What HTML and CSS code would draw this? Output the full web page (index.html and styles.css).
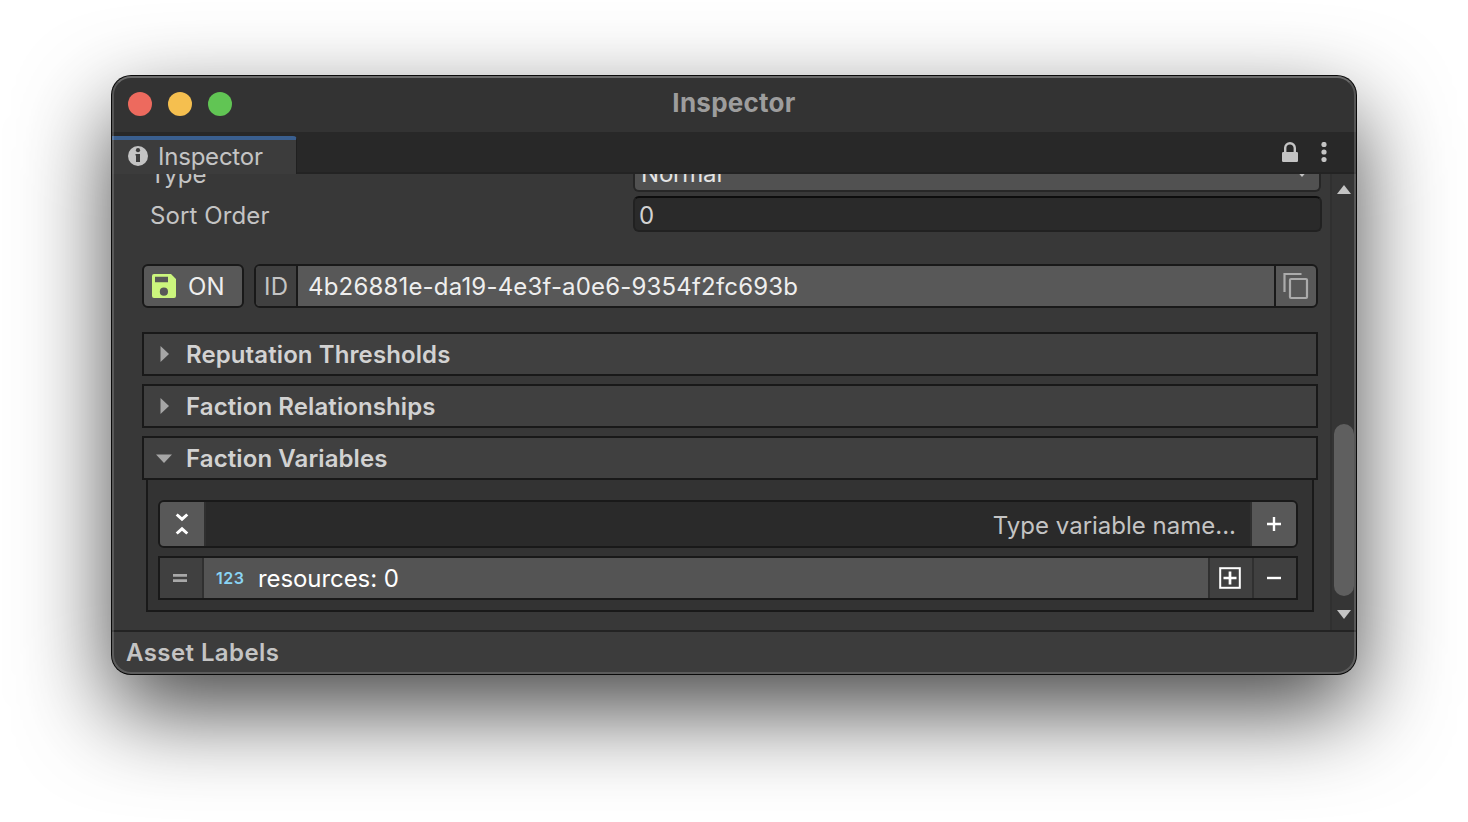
FILE: index.html
```html
<!DOCTYPE html>
<html lang="en">
<head>
<meta charset="utf-8">
<title>Inspector</title>
<link rel="stylesheet" href="styles.css">
</head>
<body>
<main class="window">
  <header class="titlebar">
    <div class="lights"><i class="light close"></i><i class="light minimise"></i><i class="light zoom"></i></div>
    <h1 class="title">Inspector</h1>
  </header>
  <nav class="tabbar">
    <div class="tab">
      <svg class="info" viewBox="0 0 20 20"><circle cx="10" cy="10" r="10" fill="#c4c4c4"/><circle cx="10" cy="4.200" r="2.100" fill="#3c3c3c"/><path d="M7.500 8H12v8H8V9.500h-.5z" fill="#3c3c3c"/></svg>
      <span class="tab-label">Inspector</span>
    </div>
    <div class="tab-tools">
      <svg width="16" height="20" viewBox="0 0 16 20"><path d="M3.200 11V6a4.800 4.800 0 0 1 9.600 0v5" fill="none" stroke="#c4c4c4" stroke-width="2.400"/><rect y="10" width="16" height="10" rx="1.200" fill="#c4c4c4"/></svg>
      <svg width="6" height="20" viewBox="0 0 6 20" fill="#c4c4c4"><circle cx="3" cy="2.500" r="2.600"/><circle cx="3" cy="10" r="2.600"/><circle cx="3" cy="17.500" r="2.600"/></svg>
    </div>
  </nav>
  <section class="body">
    <div class="content">
      <div class="field type-row"><label class="type-label">Type</label><div class="dropdown"><span>Normal</span><svg width="14" height="8" viewBox="0 0 14 8"><path d="M0 0h14L7 8z" fill="#c4c4c4"/></svg></div></div>
      <div class="field"><label>Sort Order</label><div class="number">0</div></div>
      <div class="id-row">
        <button class="toggle"><svg width="24" height="24" viewBox="0 0 24 24"><path fill="#cbf57d" fill-rule="evenodd" d="M2 0h17l5 5v17q0 2-2 2H2q-2 0-2-2V2q0-2 2-2zM3 2.700v5.600h13v-5.600zM11.900 13.600a4.100 4.100 0 1 0 0 8.200a4.100 4.100 0 0 0 0-8.200z"/></svg><span>ON</span></button>
        <div class="id-box"><span class="id-name">ID</span><span class="id-value">4b26881e-da19-4e3f-a0e6-9354f2fc693b</span><button class="copy"><svg width="26" height="28" viewBox="0 0 26 28" fill="none" stroke="#ababab"><path d="M1.500 20V2H18.500" stroke-width="2.200"/><rect x="7" y="7" width="17" height="19" rx="1" stroke-width="2.200"/></svg></button></div>
      </div>
      <div class="foldouts">
        <div class="foldout"><svg class="arrow" viewBox="0 0 16 16"><path d="M4.500 0v16l8.500-8z"/></svg><span>Reputation Thresholds</span></div>
        <div class="foldout"><svg class="arrow" viewBox="0 0 16 16"><path d="M4.500 0v16l8.500-8z"/></svg><span>Faction Relationships</span></div>
        <div class="foldout"><svg class="arrow" viewBox="0 0 16 16"><path d="M0 4.500h16l-8 8.500z"/></svg><span>Faction Variables</span></div>
      </div>
      <div class="panel">
        <div class="add-row">
          <button class="cell"><svg width="44" height="44" viewBox="0 0 44 44" fill="none" stroke="#fff" stroke-width="3"><path d="M16.700 12.500l5.300 4.700 5.300-4.700M16.700 31.500l5.300-4.700 5.300 4.700"/></svg></button>
          <span class="placeholder">Type variable name...</span>
          <button class="cell"><svg width="44" height="44" viewBox="0 0 44 44" fill="none" stroke="#fff" stroke-width="2.400"><path d="M15 22h14M22 15v14"/></svg></button>
        </div>
        <div class="var-row">
          <span class="handle"><svg width="14" height="8" viewBox="0 0 14 8" stroke="#a8a8a8" stroke-width="2.800"><path d="M0 1.400h14M0 6.600h14"/></svg></span>
          <div class="var"><b>123</b><span>resources: 0</span></div>
          <button class="act"><svg width="42" height="40" viewBox="0 0 42 40" fill="none" stroke="#fff" stroke-width="2"><rect x="10.200" y="10.200" width="19.600" height="19.600"/><path d="M13.500 20h13M20 13.500v13" stroke-width="2.700"/></svg></button>
          <button class="act"><svg width="42" height="40" viewBox="0 0 42 40" stroke="#fff" stroke-width="2.400"><path d="M13 20h14"/></svg></button>
        </div>
      </div>
    </div>
    <div class="scrollbar">
      <svg width="14" height="9" viewBox="0 0 14 9"><path d="M0 9L7 0l7 9z" fill="#c4c4c4"/></svg>
      <div class="thumb"></div>
      <svg width="14" height="9" viewBox="0 0 14 9"><path d="M0 0h14L7 9z" fill="#c4c4c4"/></svg>
    </div>
  </section>
  <footer class="footer">Asset Labels</footer>
</main>
</body>
</html>
```
FILE: styles.css
```css
* { box-sizing: border-box; }
html, body { height: 100%; }
body {
  margin: 0;
  padding: 76px 112px 0;
  overflow: hidden;
  background: #fff;
  font: 400 24px/28px Inter, "Liberation Sans", sans-serif;
  letter-spacing: .1px;
  color: #c4c4c4;
}
svg { display: block; flex: none; }
button { padding: 0; border: 0; background: none; color: inherit; font: inherit; letter-spacing: inherit; }
.window {
  position: relative;
  display: flex;
  flex-direction: column;
  width: 1244px;
  height: 598px;
  border-radius: 19px;
  background: #383838;
  box-shadow: 0 0 0 1px #0a0a0a, 0 36px 92px rgba(0, 0, 0, .73);
  overflow: hidden;
}
/* Light rim drawn over the window's edge */
.window::after {
  content: "";
  position: absolute;
  inset: 0;
  border: 2px solid rgba(255, 255, 255, .17);
  border-top-color: rgba(255, 255, 255, .28);
  border-radius: 19px;
  pointer-events: none;
}
.titlebar { display: grid; grid-template-columns: 1fr auto 1fr; height: 56px; background: #333; }
.lights { display: flex; gap: 16px; padding: 16px; }
.light { width: 24px; height: 24px; border-radius: 50%; }
.close { background: #ed6a5e; }
.minimise { background: #f5bf4f; }
.zoom { background: #61c554; }
.title { margin: 13px 0 0; font-size: 26px; font-weight: 700; letter-spacing: .25px; color: #9d9d9d; }
.tabbar { display: flex; justify-content: space-between; height: 42px; padding-top: 4px; background: #282828; box-shadow: inset 0 -2px #232323; }
.tab { display: flex; gap: 10px; width: 185px; padding: 6px 0 0 16px; border-top: 4px solid #3a5f8f; border-right: 1px solid #202020; border-radius: 0 4px 0 0; background: #3c3c3c; }
.info { width: 20px; height: 20px; }
.tab-label { margin-top: -3px; letter-spacing: -.22px; }
.tab-tools { display: flex; gap: 23px; padding: 6px 29px 0 0; }
.body { display: flex; height: 456px; }
.content { width: 1218px; height: 456px; padding: 0 8px 0 30px; overflow: hidden; }
.field { display: flex; padding-left: 8px; }
.field label { flex: none; width: 483px; padding-top: 6px; }
.field .type-label { padding-top: 5px; }
.type-row { height: 36px; margin: -18px 0 4px; }
.dropdown { display: flex; justify-content: space-between; width: 688px; height: 36px; padding: 4px 10px 0 6px; border: 2px solid #262626; border-top: 0; border-radius: 6px; background: #515151; color: #e4e4e4; letter-spacing: -.2px; }
.dropdown svg { margin-top: 9px; }
.number { width: 689px; height: 36px; padding: 4px 4px 0; border: 2px solid #212121; border-top-color: #0d0d0d; border-radius: 6px; background: #2a2a2a; color: #d2d2d2; }
.id-row { display: flex; gap: 10px; width: 1176px; height: 44px; margin: 32px 0 24px; }
.toggle { display: flex; align-items: center; gap: 12px; width: 102px; padding-left: 8px; border: 2px solid #191919; border-radius: 6px; background: #585858; color: #eee; }
.toggle span { padding-top: 1px; }
.id-box { display: flex; width: 1064px; border: 2px solid #191919; border-radius: 6px; background: #585858; color: #eee; line-height: 41px; letter-spacing: .18px; }
.id-name { width: 42px; padding-left: 8px; border-right: 2px solid #191919; background: #404040; color: #c4c4c4; border-radius: 4px 0 0 4px; }
.id-value { flex: 1; padding-left: 10px; }
.copy { width: 42px; padding: 0 0 0 7px; border-left: 2px solid #191919; }
.foldouts { display: flex; flex-direction: column; gap: 8px; width: 1176px; }
.foldout { display: flex; align-items: center; gap: 14px; height: 44px; padding-left: 12px; border: 2px solid #191919; background: #404040; color: #d2d2d2; font-weight: 600; }
.foldout span { padding-top: 1px; }
.arrow { width: 16px; height: 16px; fill: #a6a6a6; }
.panel { width: 1168px; height: 132px; margin-left: 4px; padding: 20px 14px 0 10px; border: 2px solid #191919; border-top: 0; background: #333; }
.add-row { display: flex; height: 48px; border: 2px solid #191919; border-radius: 6px; background: #303030; overflow: hidden; }
.cell { width: 44px; background: #585858; }
.placeholder { flex: 1; margin: 0 2px; padding: 10px 14px 0 0; background: #2a2a2a; text-align: right; letter-spacing: 0; }
.var-row { display: flex; gap: 2px; height: 44px; margin-top: 8px; border: 2px solid #191919; background: #303030; }
.handle { display: grid; place-items: center; width: 42px; padding-right: 2px; background: #404040; }
.var { display: flex; flex: 1; align-items: center; padding-left: 12px; background: #545454; color: #fff; }
.var span { padding-top: 1px; letter-spacing: -.08px; }
.var b { width: 42px; font-size: 16px; font-weight: 600; letter-spacing: .5px; color: #8ad4f5; }
.act { width: 42px; background: #404040; }
.scrollbar { display: flex; flex-direction: column; align-items: center; width: 26px; padding: 11px 0; border-left: 2px solid #303030; background: #353535; }
.thumb { width: 20px; height: 172px; margin: 230px 0 14px; border-radius: 10px; background: #5f5f5f; }
.footer { height: 44px; padding: 7px 14px; border-top: 2px solid #232323; background: #3c3c3c; font-weight: 600; letter-spacing: .42px; }
```
